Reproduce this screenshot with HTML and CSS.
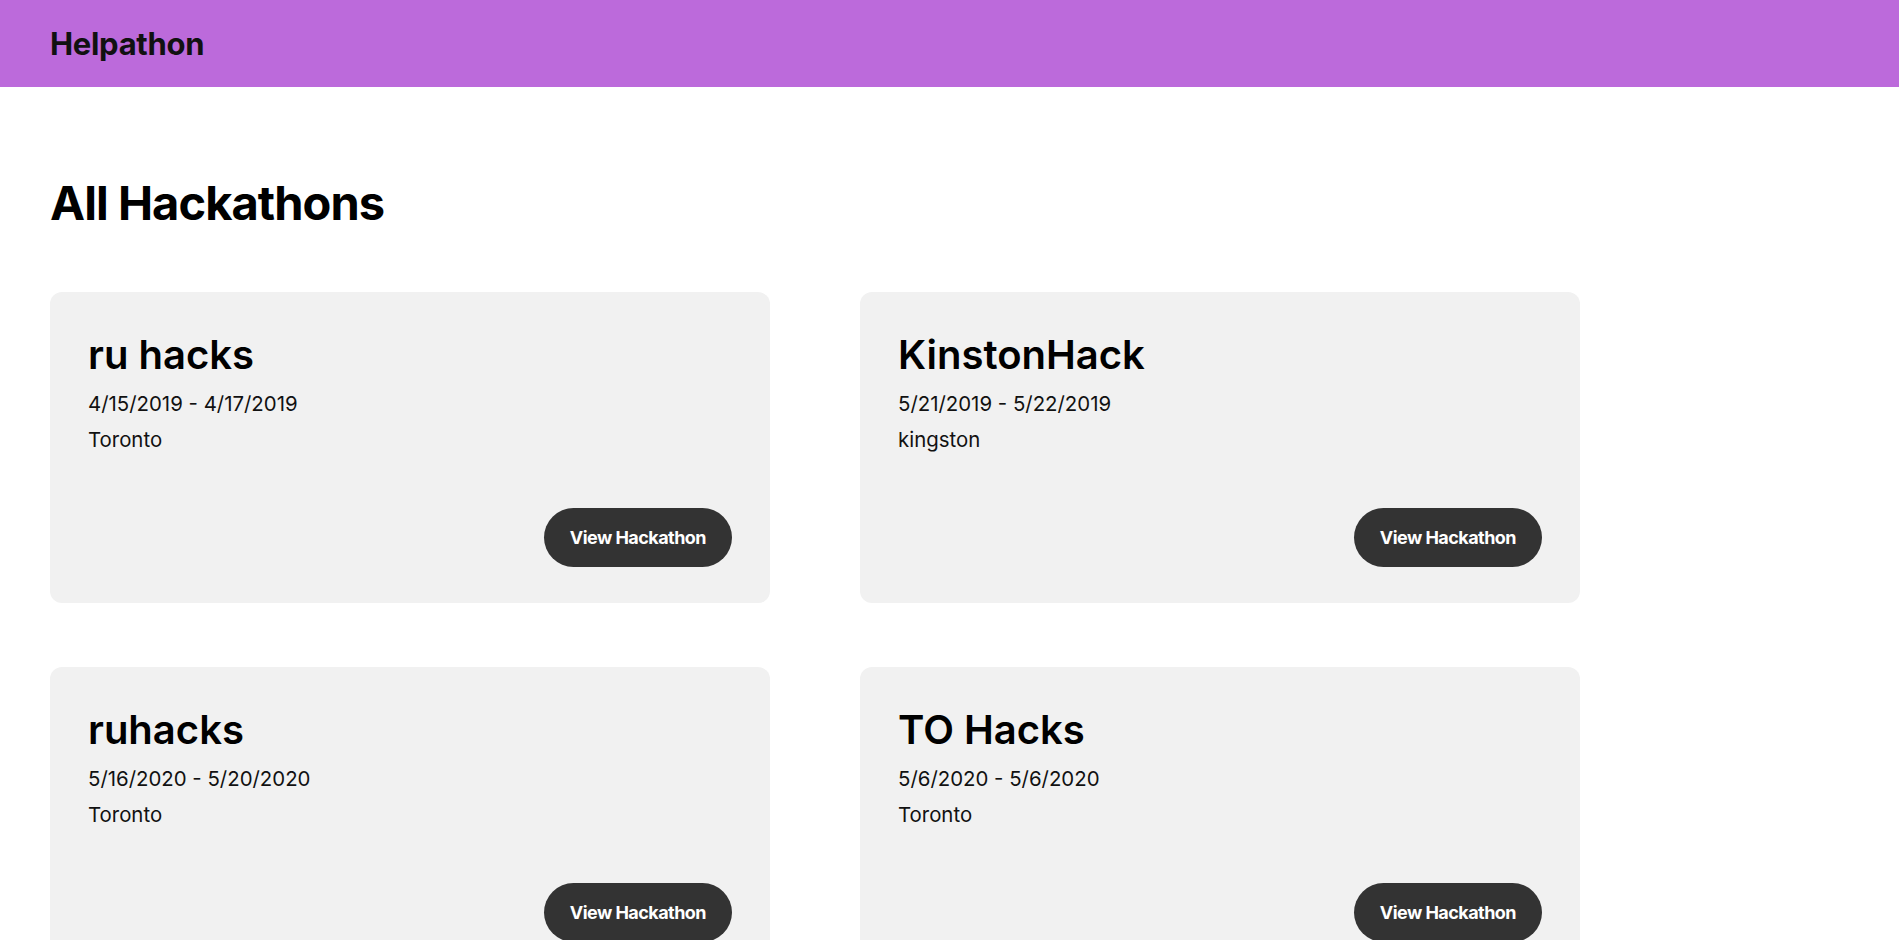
FILE: index.html
```html
<!DOCTYPE html>
<html lang="en">
<head>
<meta charset="utf-8">
<title>Helpathon</title>
<link rel="stylesheet" href="styles.css">
</head>
<body>
<header class="topbar">
  <span class="brand">Helpathon</span>
</header>
<main class="content">
  <h1 class="page-title">All Hackathons</h1>
  <div class="grid">
    <div class="card">
      <h2 class="card-title">ru hacks</h2>
      <p class="card-line">4/15/2019 - 4/17/2019</p>
      <p class="card-line">Toronto</p>
      <button class="btn">View Hackathon</button>
    </div>
    <div class="card">
      <h2 class="card-title">KinstonHack</h2>
      <p class="card-line">5/21/2019 - 5/22/2019</p>
      <p class="card-line">kingston</p>
      <button class="btn">View Hackathon</button>
    </div>
    <div class="card">
      <h2 class="card-title">ruhacks</h2>
      <p class="card-line">5/16/2020 - 5/20/2020</p>
      <p class="card-line">Toronto</p>
      <button class="btn">View Hackathon</button>
    </div>
    <div class="card">
      <h2 class="card-title">TO Hacks</h2>
      <p class="card-line">5/6/2020 - 5/6/2020</p>
      <p class="card-line">Toronto</p>
      <button class="btn">View Hackathon</button>
    </div>
  </div>
</main>
</body>
</html>
```
FILE: styles.css
```css
* { box-sizing: border-box; }
html, body {
  margin: 0;
  padding: 0;
  background: #fff;
  font-family: Inter, "Noto Sans", sans-serif;
  color: #000;
}
.topbar {
  height: 87px;
  background: #bc6adb;
  display: flex;
  align-items: center;
  padding: 0 50px;
}
.brand {
  font-size: 31px;
  font-weight: 700;
  color: #111;
  letter-spacing: -0.01em;
}
.content {
  padding: 0 50px;
}
.page-title {
  margin: 87px 0 61px;
  font-size: 47px;
  font-weight: 700;
  line-height: normal;
  letter-spacing: -0.02em;
}
.grid {
  display: grid;
  grid-template-columns: 720px 720px;
  column-gap: 90px;
  row-gap: 64px;
}
.card {
  height: 311px;
  background: #f1f1f1;
  border-radius: 12px;
  padding: 38px 38px 36px;
  display: flex;
  flex-direction: column;
}
.card-title {
  margin: 0 0 12px;
  font-size: 40px;
  font-weight: 600;
  line-height: normal;
}
.card-line {
  margin: 0 0 11px;
  font-size: 20.4px;
  line-height: normal;
  color: #111;
}
.btn {
  margin-top: auto;
  align-self: flex-end;
  height: 59px;
  padding: 0 26px;
  border: none;
  border-radius: 30px;
  background: #333;
  color: #fff;
  font-family: Inter, "Noto Sans", sans-serif;
  font-size: 18px;
  font-weight: 700;
  letter-spacing: -0.03em;
}
```
